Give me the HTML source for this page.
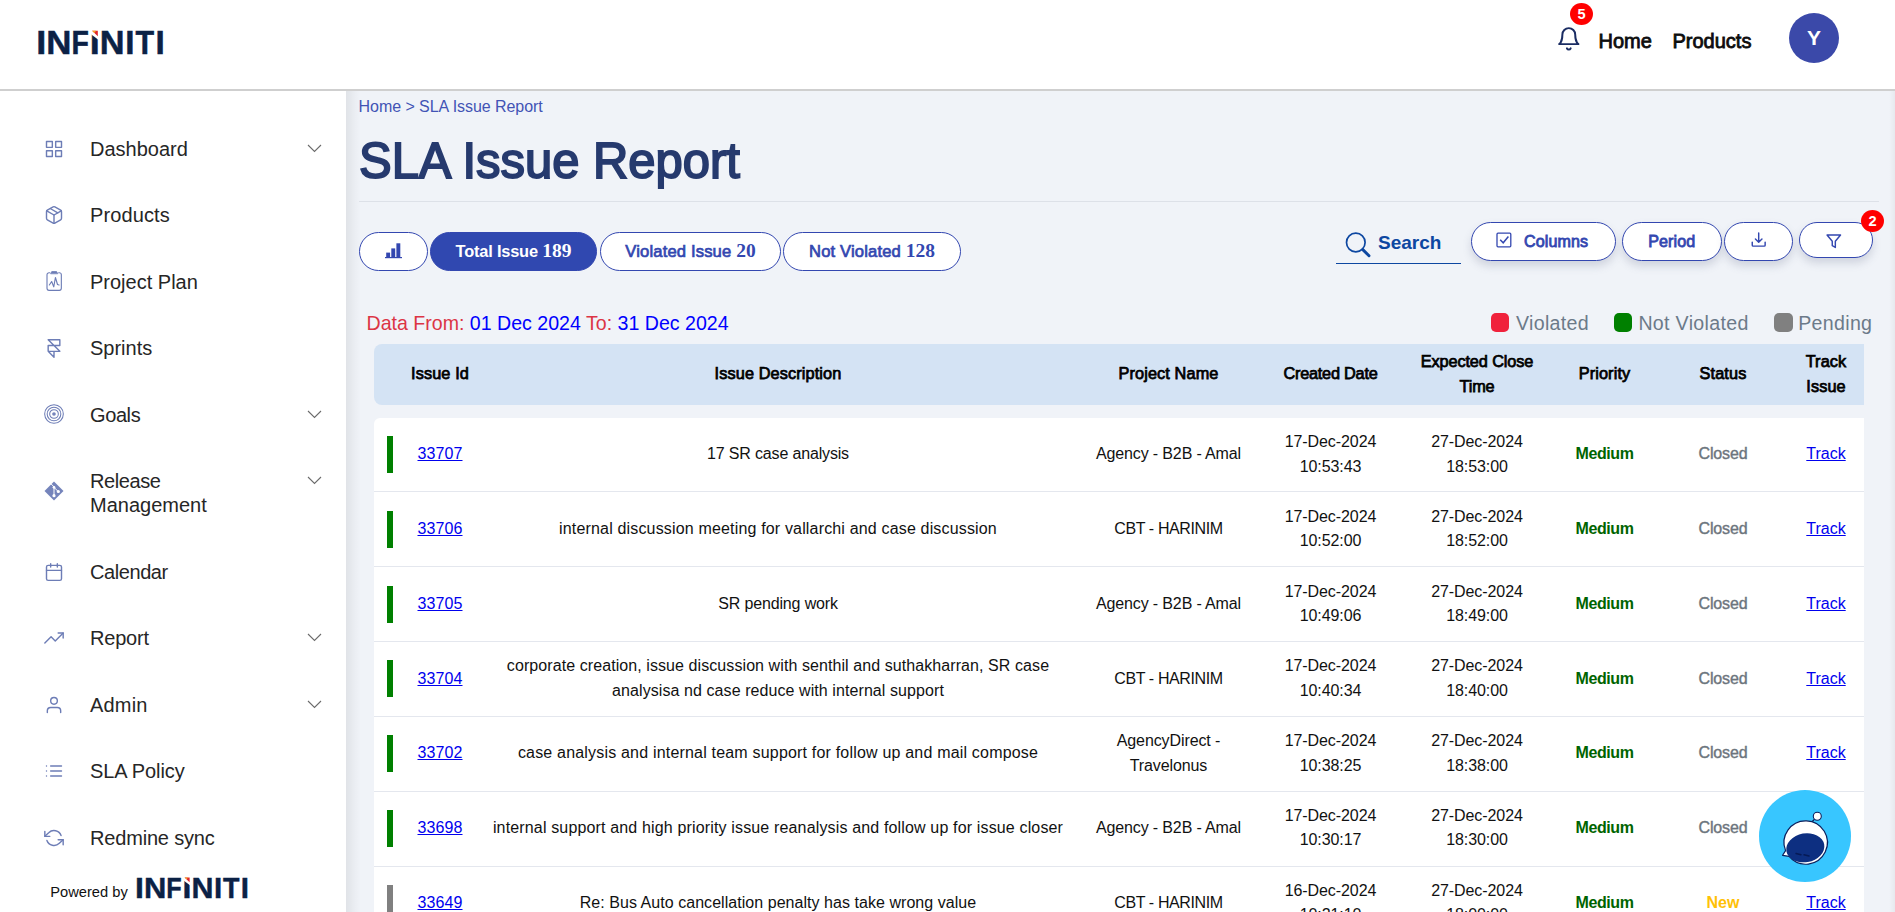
<!DOCTYPE html>
<html lang="en">
<head>
<meta charset="utf-8">
<title>SLA Issue Report</title>
<style>
*{box-sizing:border-box;margin:0;padding:0}
html,body{width:1895px;height:912px;overflow:hidden;background:#f0f3f8;font-family:"Liberation Sans",Arial,sans-serif;color:#000}
body{position:relative}
a{color:#0000ee}
/* ---------- header ---------- */
#hdr{position:absolute;left:0;top:0;width:1895px;height:91px;background:#fff;border-bottom:2px solid #cfcfcf;z-index:5}
#logo{position:absolute;left:30px;top:20px;width:145px;height:45px}
#bell{position:absolute;left:1555.8px;top:26.3px;width:25.6px;height:25.6px}
.badge{position:absolute;background:#f00;color:#fff;border-radius:50%;font-weight:bold;text-align:center}
#b5{left:1570px;top:3px;width:23px;height:22px;font-size:14.6px;line-height:22.5px}
.hl{position:absolute;top:29px;font-size:20px;line-height:24px;color:#0d0d0d;-webkit-text-stroke:.8px #0d0d0d;white-space:nowrap}
#avatar{position:absolute;left:1789px;top:13px;width:50px;height:50px;border-radius:50%;background:#3b49a9;color:#fff;font-weight:bold;font-size:21px;line-height:50.5px;text-align:center}
/* ---------- sidebar ---------- */
#side{position:absolute;left:0;top:91px;width:346px;height:821px;background:#fff;z-index:4}
#shadow{position:absolute;left:346px;top:91px;width:15px;height:821px;background:linear-gradient(to right,rgba(0,0,0,.068),rgba(0,0,0,.046) 28%,rgba(0,0,0,.02) 62%,rgba(0,0,0,0));z-index:1}
.mi{position:absolute;left:0;width:346px;height:24px}
.mi svg.ic{position:absolute;left:44px;top:2.3px;width:20px;height:20px;overflow:visible;fill:none;stroke:#6d7db6;stroke-width:1.7;stroke-linecap:round;stroke-linejoin:round}
.mi span{position:absolute;left:90px;top:0;font-size:20px;line-height:24px;color:#262626;white-space:nowrap}
.mi svg.ch{position:absolute;left:307px;top:7px;width:15px;height:9px;fill:none;stroke:#6b6b6b;stroke-width:1.1}
#pow{position:absolute;left:50.2px;top:790.8px;font-size:14.7px;line-height:20px;color:#111}
#logo2{position:absolute;left:130px;top:780px;width:125px;height:34px}
#shadowr{position:absolute;left:1889px;top:91px;width:6px;height:821px;background:linear-gradient(to left,rgba(0,0,0,.04),rgba(0,0,0,0));z-index:1}
/* ---------- main ---------- */
#crumb{position:absolute;left:358.6px;top:97px;font-size:16px;line-height:20px;color:#4253b5;white-space:nowrap;letter-spacing:-.06px}
#title{position:absolute;left:359px;top:131px;font-size:50px;line-height:60px;color:#263a6e;-webkit-text-stroke:1.9px #263a6e;white-space:nowrap;transform:scaleX(.979);transform-origin:0 0}
#hr{position:absolute;left:359px;top:201px;width:1520px;height:1px;background:#dde1e8}
.pill{position:absolute;border:1px solid #3347b0;border-radius:20px;background:#fff;color:#3347b0;white-space:nowrap;text-align:center}
.pill.sh{box-shadow:0 5px 9px rgba(90,100,130,.22)}
.pill b{font-family:"Liberation Serif",serif;font-weight:bold}
.tab{top:232px;height:39px;font-size:16.4px;line-height:35.6px;font-weight:bold;letter-spacing:-.2px}
.tab b{font-size:19.5px;letter-spacing:0}
.tab.md{font-weight:normal;-webkit-text-stroke:.7px currentColor;font-size:16.6px;letter-spacing:.15px}
.tab.md b{-webkit-text-stroke:0}
.tool{top:222px;height:39px;font-size:16.1px;line-height:37px;-webkit-text-stroke:.8px currentColor;letter-spacing:.1px}
#search{position:absolute;left:1336px;top:225px;width:125px;height:39px;border-bottom:1.5px solid #0d47a1}
#search span{position:absolute;left:42px;top:5px;font-size:19px;line-height:26px;font-weight:bold;color:#0d47a1}
#search svg{position:absolute;left:7px;top:5.2px;width:30px;height:30px}
#dfrom{position:absolute;left:366.5px;top:311px;font-size:19.58px;line-height:24px;color:#dc3545;white-space:nowrap}
#dfrom i{font-style:normal;color:#0000ff}
.lg{position:absolute;top:311px;font-size:19.6px;line-height:24px;color:#6c7a89;white-space:nowrap;letter-spacing:.32px}
.sq{position:absolute;top:313px;width:18px;height:19px;border-radius:5px}
/* ---------- table ---------- */
#thead{position:absolute;left:374px;top:344px;width:1490px;height:61px;background:#d4e3f4;border-radius:8px 0 0 8px}
.th{position:absolute;font-size:16.3px;line-height:25px;color:#000;-webkit-text-stroke:.75px #000;text-align:center;transform:translateX(-50%);white-space:nowrap;letter-spacing:.12px;margin-top:-.7px}
#tbody{position:absolute;left:374px;top:418px;width:1490px;height:494px;background:#fff;border-radius:6px 0 0 0;overflow:hidden}
.row{position:absolute;left:0;width:1490px;height:74.85px;border-bottom:1px solid #e4e7ee}
.bar{position:absolute;left:12.9px;top:18.4px;width:6.1px;height:37px;background:#008000}
.bar.g{background:#808080}
.c{position:absolute;top:0;height:74px;display:flex;align-items:center;justify-content:center;text-align:center;font-size:16px;line-height:24.8px;color:#111;transform:translateX(-50%)}
.c2{position:absolute;top:0;width:0;height:74px;font-size:16px;color:#111}
.c2 span{position:absolute;left:0;height:24px;line-height:24px;white-space:nowrap;transform:translateX(-50%)}
.c2.dt{letter-spacing:-.08px}
.c.pr{color:#006400;font-weight:bold;letter-spacing:-.4px}
.c.st{color:#6c757d;-webkit-text-stroke:.4px #6c757d;letter-spacing:-.15px}
.c.dt{letter-spacing:-.08px}
.c.id{letter-spacing:.1px}
.c.nw{color:#ffc107;font-weight:bold}
#chat{position:absolute;left:1759.2px;top:789.9px;width:92px;height:92px;z-index:9}
</style>
</head>
<body>

<!-- HEADER -->
<div id="hdr">
  <svg id="logo" viewBox="30 20 145 45">
    <text y="53.75" font-family="Liberation Sans, sans-serif" font-weight="bold" font-size="33.14" fill="#0b2145" stroke="#0b2145" stroke-width="0.5"><tspan x="36.24" textLength="10.03" lengthAdjust="spacingAndGlyphs">I</tspan><tspan x="46.32" textLength="25.18" lengthAdjust="spacingAndGlyphs">N</tspan><tspan x="71.55" textLength="17.34" lengthAdjust="spacingAndGlyphs">F</tspan><tspan x="89.84" textLength="10.03" lengthAdjust="spacingAndGlyphs">I</tspan><tspan x="99.85" textLength="24.81" lengthAdjust="spacingAndGlyphs">N</tspan><tspan x="125.22" textLength="9.26" lengthAdjust="spacingAndGlyphs">I</tspan><tspan x="135.51" textLength="18.57" lengthAdjust="spacingAndGlyphs">T</tspan><tspan x="155.42" textLength="9.26" lengthAdjust="spacingAndGlyphs">I</tspan></text>
    <polygon points="91,29 99,29 99,40.2 91,34.2" fill="#fff"/>
    <polygon points="92.1,30.8 97.8,30.8 97.8,36.3" fill="#e0242c"/>
    <polygon points="92.1,30.8 96.2,30.8 94.3,32.9" fill="#f6a623"/>
  </svg>
  <svg id="bell" viewBox="0 0 24 24" fill="none" stroke="#1a2c63" stroke-width="1.85" stroke-linecap="round" stroke-linejoin="round"><path d="M18 8A6 6 0 0 0 6 8c0 7-3 9-3 9h18s-3-2-3-9"/><path d="M13.73 21a2 2 0 0 1-3.46 0"/></svg>
  <div class="badge" id="b5">5</div>
  <div class="hl" style="left:1598.5px">Home</div>
  <div class="hl" style="left:1672.5px">Products</div>
  <div id="avatar">Y</div>
</div>

<!-- SIDEBAR -->
<div id="side">
  <div class="mi" style="top:46px"><svg class="ic" viewBox="0 0 24 24"><rect x="3" y="3" width="7" height="7"/><rect x="14" y="3" width="7" height="7"/><rect x="14" y="14" width="7" height="7"/><rect x="3" y="14" width="7" height="7"/></svg><span>Dashboard</span><svg class="ch" viewBox="0 0 15 9"><path d="M1 1l6.5 6.5L14 1"/></svg></div>
  <div class="mi" style="top:112px"><svg class="ic" viewBox="0 0 24 24"><path d="M16.5 9.4l-9-5.19"/><path d="M21 16V8a2 2 0 0 0-1-1.73l-7-4a2 2 0 0 0-2 0l-7 4A2 2 0 0 0 3 8v8a2 2 0 0 0 1 1.73l7 4a2 2 0 0 0 2 0l7-4A2 2 0 0 0 21 16z"/><path d="M3.27 6.96L12 12.01l8.73-5.05"/><path d="M12 22.08V12"/></svg><span style="letter-spacing:.12px">Products</span></div>
  <div class="mi" style="top:179px"><svg class="ic" viewBox="0 0 24 24" style="stroke-width:1.35"><path d="M6.800 0.900H6a2.400 2.400 0 0 0-2.400 2.400V19.600A2.400 2.400 0 0 0 6 22h12.400a2.400 2.400 0 0 0 2.400-2.400V3.300A2.400 2.400 0 0 0 18.400 0.900H17.600"/><path d="M8.100 1.700L9.300-0.500h5.800L16.300 1.700z" fill="#6d7db6" stroke-width="1"/><path d="M6.400 15.600l2.800-4.200 2.500 6.400 2-11.200 2.500 8.400 1.900 0.600"/></svg><span>Project Plan</span></div>
  <div class="mi" style="top:245px"><svg class="ic" viewBox="0 0 24 24"><path d="M5 16V9h14V2H5l14 14h-7m-7 0l7 7v-7m-7 0h7"/></svg><span>Sprints</span></div>
  <div class="mi" style="top:312px"><svg class="ic" viewBox="0 0 24 24" style="stroke-width:1.25;top:1.4px"><circle cx="12" cy="12" r="11.2"/><circle cx="12" cy="12" r="8.2"/><circle cx="12" cy="12" r="5.2"/><circle cx="12" cy="12" r="2.2" fill="#7584bb" stroke="none"/></svg><span style="letter-spacing:-.4px">Goals</span><svg class="ch" viewBox="0 0 15 9"><path d="M1 1l6.5 6.5L14 1"/></svg></div>
  <div class="mi" style="top:378px;height:48px"><svg class="ic" viewBox="0 0 24 24" style="top:12px"><path d="M12 0.6L23.4 12 12 23.4 0.6 12z" fill="#7584bb" stroke="none"/><path d="M8.600 3.600l3.400 3.400v10.400M12.600 8.200l4.200 4.200" stroke="#fff" stroke-width="1.200"/><circle cx="12" cy="7.6" r="1.6" fill="#fff" stroke="none"/><circle cx="12" cy="17.6" r="1.9" fill="#fff" stroke="none"/><circle cx="17.2" cy="12.6" r="1.9" fill="#fff" stroke="none"/></svg><span><em style="font-style:normal;letter-spacing:-.4px">Release</em><br>Management</span><svg class="ch" viewBox="0 0 15 9"><path d="M1 1l6.5 6.5L14 1"/></svg></div>
  <div class="mi" style="top:469px"><svg class="ic" viewBox="0 0 24 24"><rect x="3" y="4" width="18" height="18" rx="2" ry="2"/><path d="M16 2v4M8 2v4M3 10h18"/></svg><span style="letter-spacing:-.42px">Calendar</span></div>
  <div class="mi" style="top:535px"><svg class="ic" viewBox="0 0 24 24"><path d="M23 6l-9.500 9.500-5-5L1 18"/><path d="M17 6h6v6"/></svg><span style="letter-spacing:-.2px">Report</span><svg class="ch" viewBox="0 0 15 9"><path d="M1 1l6.5 6.5L14 1"/></svg></div>
  <div class="mi" style="top:602px"><svg class="ic" viewBox="0 0 24 24"><path d="M20 21v-2a4 4 0 0 0-4-4H8a4 4 0 0 0-4 4v2"/><circle cx="12" cy="7" r="4"/></svg><span style="letter-spacing:.2px">Admin</span><svg class="ch" viewBox="0 0 15 9"><path d="M1 1l6.5 6.5L14 1"/></svg></div>
  <div class="mi" style="top:668px"><svg class="ic" viewBox="0 0 24 24"><path d="M8 6h13M8 12h13M8 18h13M3 6h.01M3 12h.01M3 18h.01"/></svg><span style="letter-spacing:-.1px">SLA Policy</span></div>
  <div class="mi" style="top:735px"><svg class="ic" viewBox="0 0 24 24"><path d="M1 4v6h6"/><path d="M23 20v-6h-6"/><path d="M20.490 9A9 9 0 0 0 5.640 5.640L1 10m22 4l-4.640 4.360A9 9 0 0 1 3.510 15"/></svg><span style="letter-spacing:-.18px">Redmine sync</span></div>
  <div id="pow">Powered by</div>
  <svg id="logo2" viewBox="130 871 125 34">
    <g transform="translate(102.8 850.05) scale(0.8875)"><text y="53.75" font-family="Liberation Sans, sans-serif" font-weight="bold" font-size="33.14" fill="#0b2145" stroke="#0b2145" stroke-width="0.5"><tspan x="36.24" textLength="10.03" lengthAdjust="spacingAndGlyphs">I</tspan><tspan x="46.32" textLength="25.18" lengthAdjust="spacingAndGlyphs">N</tspan><tspan x="71.55" textLength="17.34" lengthAdjust="spacingAndGlyphs">F</tspan><tspan x="89.84" textLength="10.03" lengthAdjust="spacingAndGlyphs">I</tspan><tspan x="99.85" textLength="24.81" lengthAdjust="spacingAndGlyphs">N</tspan><tspan x="125.22" textLength="9.26" lengthAdjust="spacingAndGlyphs">I</tspan><tspan x="135.51" textLength="18.57" lengthAdjust="spacingAndGlyphs">T</tspan><tspan x="155.42" textLength="9.26" lengthAdjust="spacingAndGlyphs">I</tspan></text>
    <polygon points="91,29 99,29 99,40.2 91,34.2" fill="#fff"/>
    <polygon points="92.1,30.8 97.8,30.8 97.8,36.3" fill="#e0242c"/>
    <polygon points="92.1,30.8 96.2,30.8 94.3,32.9" fill="#f6a623"/></g>
  </svg>
</div>
<div id="shadow"></div>
<div id="shadowr"></div>

<!-- MAIN -->
<div id="crumb">Home &gt; SLA Issue Report</div>
<div id="title">SLA Issue Report</div>
<div id="hr"></div>

<div class="pill tab" style="left:359px;width:69px"><svg viewBox="0 0 17 16" style="position:absolute;left:25px;top:9.700px;width:17px;height:16px" fill="#3347b0"><rect x="1.200" y="9.600" width="3.900" height="5"/><rect x="6.300" y="5.400" width="3.900" height="9"/><rect x="11.400" y="0.300" width="3.900" height="14"/><rect x="0" y="14" width="17" height="1.200"/></svg></div>
<div class="pill tab" style="left:430px;width:167px;background:#3048b0;color:#fff">Total Issue <b>189</b></div>
<div class="pill tab md" style="left:600px;width:181px">Violated Issue <b>20</b></div>
<div class="pill tab md" style="left:783px;width:178px">Not Violated <b>128</b></div>

<div id="search"><svg viewBox="0 0 30 30" fill="none" stroke="#0d47a1" stroke-linecap="round"><circle cx="12.800" cy="12.500" r="9.300" stroke-width="1.700"/><path d="M19.800 19.600l6.200 6.200" stroke-width="2.900"/></svg><span>Search</span></div>

<div class="pill tool sh" style="left:1471px;width:145px;text-align:left;padding-left:52px"><svg viewBox="0 0 16 16" style="position:absolute;left:23.700px;top:9.200px;width:16px;height:16px" fill="none" stroke="#3347b0" stroke-width="1.300"><rect x="1" y="1.200" width="13.800" height="13.600" rx="1"/><path d="M4.200 7.800l3 3 5.200-6.200" stroke-width="1.500"/></svg>Columns</div>
<div class="pill tool sh" style="left:1622px;width:99.500px">Period</div>
<div class="pill tool sh" style="left:1724px;width:69px"><svg viewBox="0 0 16 16" style="position:absolute;left:26.200px;top:8.600px;width:15.400px;height:15.400px" fill="none" stroke="#3347b0" stroke-width="1.500" stroke-linecap="round" stroke-linejoin="round"><path d="M1.300 10.500v3.200a1 1 0 0 0 1 1h11.400a1 1 0 0 0 1-1v-3.200"/><path d="M8 1v9.500M4.600 7.200L8 10.600l3.400-3.400"/></svg></div>
<div class="pill tool sh" style="left:1799px;width:74px;height:36px"><svg viewBox="0 0 16 16" style="position:absolute;left:24.600px;top:11px;width:17.600px;height:15.400px" fill="none" stroke="#3347b0" stroke-width="1.500" stroke-linejoin="round"><path d="M1 1h14l-5.400 6.600v6.400l-3.200-1.800V7.600z"/></svg></div>
<div class="badge" style="left:1861px;top:210px;width:23px;height:22px;font-size:14.6px;line-height:22.5px;z-index:3">2</div>

<div id="dfrom">Data From: <i>01 Dec 2024</i> To: <i>31 Dec 2024</i></div>
<div class="sq" style="left:1491px;background:#f0223c"></div><div class="lg" style="left:1516px">Violated</div>
<div class="sq" style="left:1614px;background:#008000"></div><div class="lg" style="left:1638.400px">Not Violated</div>
<div class="sq" style="left:1774px;width:19px;background:#808080"></div><div class="lg" style="left:1798.200px">Pending</div>

<!-- TABLE -->
<div id="thead">
  <div class="th" style="left:66px;top:18px">Issue Id</div>
  <div class="th" style="left:404px;top:18px">Issue Description</div>
  <div class="th" style="left:794.500px;top:18px">Project Name</div>
  <div class="th" style="left:956.500px;top:18px;letter-spacing:-.22px">Created Date</div>
  <div class="th" style="left:1103px;top:5.500px;letter-spacing:-.1px">Expected Close<br>Time</div>
  <div class="th" style="left:1230.500px;top:18px">Priority</div>
  <div class="th" style="left:1349px;top:18px">Status</div>
  <div class="th" style="left:1452px;top:5.500px">Track<br>Issue</div>
</div>
<div id="tbody">
  <div class="row" style="top:-0.8px">
    <div class="bar"></div>
    <div class="c id" style="left:66px"><a href="#">33707</a></div>
    <div class="c ds" style="left:404px;letter-spacing:-0.16px">17 SR case analysis</div>
    <div class="c pj" style="left:794.5px;letter-spacing:-0.14px">Agency - B2B - Amal</div>
    <div class="c2 dt" style="left:956.5px"><span style="top:12.8px">17-Dec-2024</span><span style="top:37.8px">10:53:43</span></div>
    <div class="c2 dt" style="left:1103px"><span style="top:12.8px">27-Dec-2024</span><span style="top:37.8px">18:53:00</span></div>
    <div class="c pr" style="left:1230.5px">Medium</div>
    <div class="c st" style="left:1349px">Closed</div>
    <div class="c tk" style="left:1452px"><a href="#">Track</a></div>
  </div>
  <div class="row" style="top:74.4px">
    <div class="bar"></div>
    <div class="c id" style="left:66px"><a href="#">33706</a></div>
    <div class="c ds" style="left:404px;letter-spacing:0.165px">internal discussion meeting for vallarchi and case discussion</div>
    <div class="c pj" style="left:794.5px;letter-spacing:-0.38px">CBT - HARINIM</div>
    <div class="c2 dt" style="left:956.5px"><span style="top:12.6px">17-Dec-2024</span><span style="top:36.6px">10:52:00</span></div>
    <div class="c2 dt" style="left:1103px"><span style="top:12.6px">27-Dec-2024</span><span style="top:36.6px">18:52:00</span></div>
    <div class="c pr" style="left:1230.5px">Medium</div>
    <div class="c st" style="left:1349px">Closed</div>
    <div class="c tk" style="left:1452px"><a href="#">Track</a></div>
  </div>
  <div class="row" style="top:149.25px">
    <div class="bar"></div>
    <div class="c id" style="left:66px"><a href="#">33705</a></div>
    <div class="c ds" style="left:404px;letter-spacing:-0.14px">SR pending work</div>
    <div class="c pj" style="left:794.5px;letter-spacing:-0.14px">Agency - B2B - Amal</div>
    <div class="c2 dt" style="left:956.5px"><span style="top:12.75px">17-Dec-2024</span><span style="top:36.75px">10:49:06</span></div>
    <div class="c2 dt" style="left:1103px"><span style="top:12.75px">27-Dec-2024</span><span style="top:36.75px">18:49:00</span></div>
    <div class="c pr" style="left:1230.5px">Medium</div>
    <div class="c st" style="left:1349px">Closed</div>
    <div class="c tk" style="left:1452px"><a href="#">Track</a></div>
  </div>
  <div class="row" style="top:224.1px">
    <div class="bar"></div>
    <div class="c id" style="left:66px"><a href="#">33704</a></div>
    <div class="c2 ds" style="left:404px;letter-spacing:0.08px"><span style="top:11.9px">corporate creation, issue discussion with senthil and suthakharran, SR case</span><span style="top:36.9px">analysisa nd case reduce with internal support</span></div>
    <div class="c pj" style="left:794.5px;letter-spacing:-0.38px">CBT - HARINIM</div>
    <div class="c2 dt" style="left:956.5px"><span style="top:11.9px">17-Dec-2024</span><span style="top:36.9px">10:40:34</span></div>
    <div class="c2 dt" style="left:1103px"><span style="top:11.9px">27-Dec-2024</span><span style="top:36.9px">18:40:00</span></div>
    <div class="c pr" style="left:1230.5px">Medium</div>
    <div class="c st" style="left:1349px">Closed</div>
    <div class="c tk" style="left:1452px"><a href="#">Track</a></div>
  </div>
  <div class="row" style="top:298.95px">
    <div class="bar"></div>
    <div class="c id" style="left:66px;top:-0.6px"><a href="#">33702</a></div>
    <div class="c ds" style="left:404px;letter-spacing:0.19px;top:-0.6px">case analysis and internal team support for follow up and mail compose</div>
    <div class="c2 pj" style="left:794.5px;letter-spacing:-0.1px"><span style="top:12.05px">AgencyDirect -</span><span style="top:37.05px">Travelonus</span></div>
    <div class="c2 dt" style="left:956.5px"><span style="top:12.05px">17-Dec-2024</span><span style="top:37.05px">10:38:25</span></div>
    <div class="c2 dt" style="left:1103px"><span style="top:12.05px">27-Dec-2024</span><span style="top:37.05px">18:38:00</span></div>
    <div class="c pr" style="left:1230.5px;top:-0.6px">Medium</div>
    <div class="c st" style="left:1349px;top:-0.6px">Closed</div>
    <div class="c tk" style="left:1452px;top:-0.6px"><a href="#">Track</a></div>
  </div>
  <div class="row" style="top:373.8px">
    <div class="bar"></div>
    <div class="c id" style="left:66px"><a href="#">33698</a></div>
    <div class="c ds" style="left:404px;letter-spacing:0.153px">internal support and high priority issue reanalysis and follow up for issue closer</div>
    <div class="c pj" style="left:794.5px;letter-spacing:-0.14px">Agency - B2B - Amal</div>
    <div class="c2 dt" style="left:956.5px"><span style="top:12.2px">17-Dec-2024</span><span style="top:36.2px">10:30:17</span></div>
    <div class="c2 dt" style="left:1103px"><span style="top:12.2px">27-Dec-2024</span><span style="top:36.2px">18:30:00</span></div>
    <div class="c pr" style="left:1230.5px">Medium</div>
    <div class="c st" style="left:1349px">Closed</div>
    <div class="c tk" style="left:1452px"><a href="#">Track</a></div>
  </div>
  <div class="row" style="top:448.65px">
    <div class="bar g"></div>
    <div class="c id" style="left:66px"><a href="#">33649</a></div>
    <div class="c ds" style="left:404px;letter-spacing:0.045px">Re: Bus Auto cancellation penalty has take wrong value</div>
    <div class="c pj" style="left:794.5px;letter-spacing:-0.38px">CBT - HARINIM</div>
    <div class="c2 dt" style="left:956.5px"><span style="top:12.35px">16-Dec-2024</span><span style="top:36.35px">10:21:10</span></div>
    <div class="c2 dt" style="left:1103px"><span style="top:12.35px">27-Dec-2024</span><span style="top:36.35px">18:00:00</span></div>
    <div class="c pr" style="left:1230.5px">Medium</div>
    <div class="c nw" style="left:1349px">New</div>
    <div class="c tk" style="left:1452px"><a href="#">Track</a></div>
  </div>
</div>

<svg id="chat" viewBox="0 0 92 92">
  <circle cx="46" cy="46" r="46" fill="#38c6ff"/>
  <path d="M58.300 26.300l-5 5.200" stroke="#0a1f5c" stroke-width="1.200"/>
  <circle cx="58.300" cy="26.300" r="4" fill="#fff" stroke="#0a1f5c" stroke-width="1.100"/>
  <path d="M26.580 60.630A21.700 21.700 0 1 1 30.080 66.450L23.600 65.300Z" fill="#fff" stroke="#0a1f5c" stroke-width="1.200" stroke-linejoin="round"/>
  <ellipse cx="46.300" cy="57.800" rx="19.200" ry="14.400" transform="rotate(-10 46.300 57.800)" fill="#0d2f81"/>
  <path d="M37 63.500l5 1.200M45 64.800l5 1.200" stroke="#061a55" stroke-width="1.400" stroke-linecap="round"/>
</svg>

</body>
</html>
